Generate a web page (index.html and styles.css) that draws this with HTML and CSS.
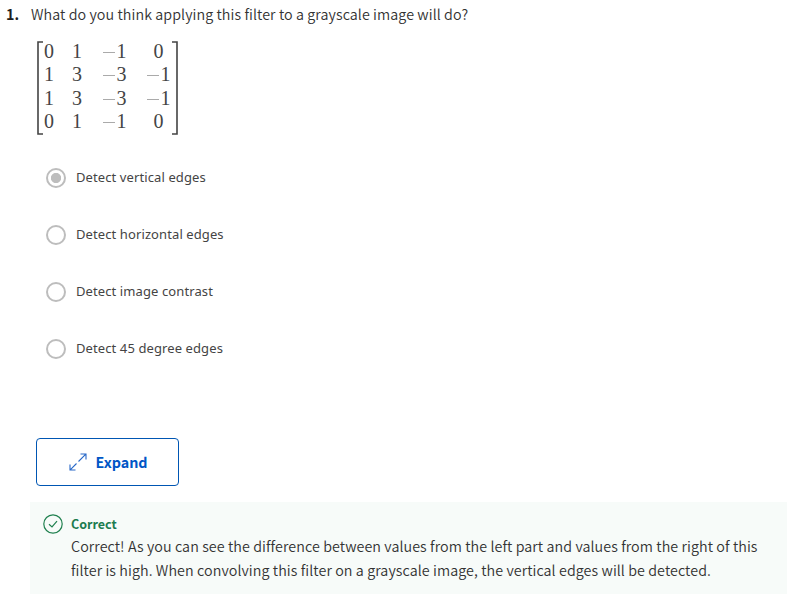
FILE: index.html
```html
<!DOCTYPE html>
<html lang="en">
<head>
<meta charset="utf-8">
<title>Quiz question</title>
<link rel="stylesheet" href="styles.css">
</head>
<body>
<main class="question">
  <div class="prompt"><span class="number">1.</span><span class="prompt-text">What do you think applying this filter to a grayscale image will do?</span></div>
  <div class="matrix">
    <svg class="bracket" width="7" height="94" viewBox="0 0 7 94"><path d="M7 1H2V93H7"/></svg>
    <div class="cells">
      <span>0</span><span>1</span><span><i></i>1</span><span>0</span>
      <span>1</span><span>3</span><span><i></i>3</span><span><i></i>1</span>
      <span>1</span><span>3</span><span><i></i>3</span><span><i></i>1</span>
      <span>0</span><span>1</span><span><i></i>1</span><span>0</span>
    </div>
    <svg class="bracket" width="6" height="94" viewBox="0 0 6 94"><path d="M0 1H5V93H0"/></svg>
  </div>
  <div class="options">
    <label class="option"><span class="radio checked"></span><span class="choice">Detect vertical edges</span></label>
    <label class="option"><span class="radio"></span><span class="choice">Detect horizontal edges</span></label>
    <label class="option"><span class="radio"></span><span class="choice">Detect image contrast</span></label>
    <label class="option"><span class="radio"></span><span class="choice">Detect 45 degree edges</span></label>
  </div>
  <button class="expand">
    <svg width="20" height="20" viewBox="0 0 20 20"><path d="M2.2 17.8L8.5 11.5M10.5 9.5L17.8 2.2M12.5 2H18V7.5M2 12.5V18H7.5"/></svg>
    <span>Expand</span>
  </button>
  <section class="feedback">
    <svg width="20" height="20" viewBox="0 0 20 20"><circle cx="10" cy="10" r="9.2"/><path d="M6 10.3L9 13L14 7.2"/></svg>
    <div>
      <div class="verdict">Correct</div>
      <div class="line">Correct! As you can see the difference between values from the left part and values from the right of this</div>
      <div class="line">filter is high. When convolving this filter on a grayscale image, the vertical edges will be detected.</div>
    </div>
  </section>
</main>
</body>
</html>
```
FILE: styles.css
```css
body {
  margin: 0;
  background: #fff;
  color: #333;
  font-family: "Noto Sans CJK SC", "Open Sans", sans-serif;
}
.question { display: flex; flex-direction: column; align-items: flex-start; }
.prompt {
  display: flex;
  height: 24px;
  margin: 2px 0 0 6px;
  font-size: 14.3px;
  line-height: 24px;
  white-space: nowrap;
}
.prompt-text, .line { font-weight: 350; letter-spacing: .077px; }
.number { width: 25px; font-weight: 700; color: #1f1f1f; }
.matrix { display: flex; height: 94px; margin: 15px 0 0 36px; }
.bracket { fill: none; stroke: #444; stroke-width: 1.6; }
.cells {
  display: grid;
  grid-template-columns: 11px 28px 44.5px 44px;
  grid-auto-rows: 23.4px;
  width: 129px;
  margin-top: -1px;
  font: 20px/23px "Liberation Serif", serif;
  color: #444;
}
.cells span { text-align: right; white-space: nowrap; }
.cells span:nth-child(4), .cells span:nth-child(16) { padding-right: 7px; }
.cells i {
  display: inline-block;
  width: 12px;
  height: 1px;
  margin-right: 2px;
  background: #aaa;
  vertical-align: 5px;
}
.options { margin: 33px 0 0 46px; display: flex; flex-direction: column; gap: 37px; }
.option {
  display: flex;
  align-items: center;
  gap: 10px;
  height: 20px;
  font: 13px/20px "Noto Sans", sans-serif;
  letter-spacing: .1px;
  color: #444;
  white-space: nowrap;
}
.choice { padding-bottom: 2px; }
.radio {
  box-sizing: border-box;
  width: 20px;
  height: 20px;
  border: 2px solid #bdbdbd;
  border-radius: 50%;
}
.checked { background: radial-gradient(circle, #bdbdbd 4.7px, transparent 5.5px); }
.expand {
  display: flex;
  align-items: center;
  justify-content: center;
  gap: 8px;
  box-sizing: border-box;
  width: 143px;
  height: 48px;
  margin: 79px 0 0 36px;
  padding: 0;
  border: 1px solid #0056b3;
  border-radius: 4px;
  background: #fff;
  color: #0056c6;
  font: 700 14.3px/24px "Noto Sans CJK SC", sans-serif;
}
.expand svg { fill: none; stroke: #2868c8; stroke-width: 1.1; }
.feedback {
  display: flex;
  gap: 8px;
  box-sizing: border-box;
  width: 757px;
  height: 92px;
  margin: 16px 0 0 30px;
  padding: 12px 0 0 13px;
  background: #f7fbf9;
  font-size: 14.3px;
  line-height: 24px;
  white-space: nowrap;
}
.feedback svg { fill: none; stroke: #20804f; stroke-width: 1.2; }
.verdict { height: 20px; line-height: 20px; font-size: 12.5px; font-weight: 700; color: #1d7c50; }
```
